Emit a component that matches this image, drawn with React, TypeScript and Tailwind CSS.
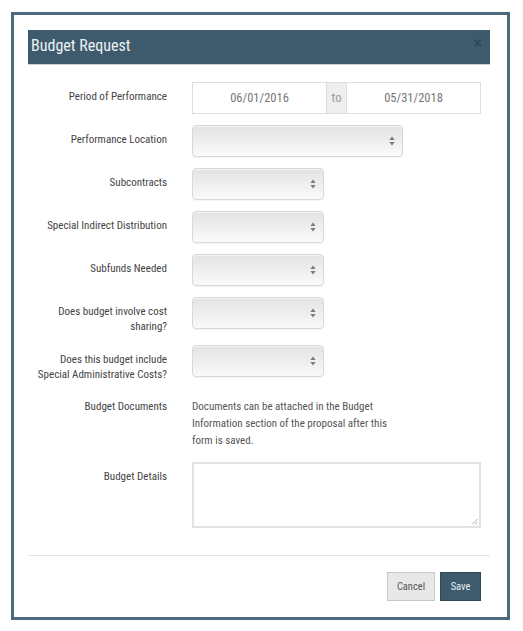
import React from "react";

const font = { fontFamily: "'Roboto Condensed', Roboto, sans-serif" };

function Arrows() {
  return (
    <svg width="6" height="10" viewBox="0 0 6 10" className="absolute right-[7px] top-1/2 -translate-y-1/2">
      <path d="M3 0.5 L5.6 4 L0.4 4 Z" fill="#7a7a7a" />
      <path d="M3 9.5 L5.6 6 L0.4 6 Z" fill="#7a7a7a" />
    </svg>
  );
}

function Select({ w }: { w: string }) {
  return (
    <div
      className={`relative h-[32px] ${w} rounded-[4px] border border-[#d8d8d8] bg-gradient-to-b from-[#e3e3e3] to-[#fafafa] shadow-[inset_0_1px_1px_rgba(255,255,255,0.6),0_1px_1px_rgba(0,0,0,0.05)]`}
    >
      <Arrows />
    </div>
  );
}

function Label({ children }: { children: React.ReactNode }) {
  return (
    <div className="w-[139px] shrink-0 pt-[7px] text-right text-[11px] leading-[15px] text-[#444]">
      {children}
    </div>
  );
}

function Row({ label, children, mb = "mb-[11px]" }: { label: React.ReactNode; children: React.ReactNode; mb?: string }) {
  return (
    <div className={`flex items-start gap-[25px] ${mb}`}>
      <Label>{label}</Label>
      {children}
    </div>
  );
}

export default function App() {
  return (
    <div className="min-h-[631px] w-[523px] bg-white pl-[11px] pt-[12px]" style={font}>
      <div className="w-[499px] h-[608px] border-[3px] border-[#4b6a7c] bg-white pl-[14px] pr-[17px] pt-[15px]">
        <div className="relative h-[35px] bg-[#3d5b6d] border-b border-[#c9d3d8] flex items-center pl-[3px]">
          <span className="text-[16px] text-[#eef2f5] leading-none -mt-[3px]">Budget Request</span>
          <span className="absolute right-[8px] top-[5px] text-[15px] font-bold text-[#2e4757] leading-none" style={{ fontFamily: "'Liberation Sans', sans-serif" }}>×</span>
        </div>

        <div className="pt-[17px]">
          <Row label="Period of Performance">
            <div className="flex h-[32px] w-[289px] border border-[#dedede] text-[12.5px] text-[#777]">
              <div className="flex-1 flex items-center justify-center">06/01/2016</div>
              <div className="w-[21px] bg-[#eeeeee] border-x border-[#dedede] flex items-center justify-center text-[#999]">to</div>
              <div className="flex-1 flex items-center justify-center">05/31/2018</div>
            </div>
          </Row>
          <Row label="Performance Location">
            <Select w="w-[211px]" />
          </Row>
          <Row label="Subcontracts">
            <Select w="w-[132px]" />
          </Row>
          <Row label="Special Indirect Distribution">
            <Select w="w-[132px]" />
          </Row>
          <Row label="Subfunds Needed">
            <Select w="w-[132px]" />
          </Row>
          <Row label={<>Does budget involve cost<br />sharing?</>}>
            <Select w="w-[132px]" />
          </Row>
          <Row label={<>Does this budget include<br />Special Administrative Costs?</>} mb="mb-[16px]">
            <Select w="w-[132px]" />
          </Row>
          <div className="flex items-start gap-[25px] mb-[13px]">
            <div className="w-[139px] shrink-0 text-right text-[11px] leading-[17px] text-[#444]">Budget Documents</div>
            <div className="w-[198px] text-[11px] leading-[17px] text-[#555]">
              Documents can be attached in the Budget Information section of the proposal after this form is saved.
            </div>
          </div>
          <div className="flex items-start gap-[25px]">
            <Label>Budget Details</Label>
            <div className="relative h-[66px] w-[289px] border-2 border-[#e2e2e2] bg-white">
              <svg width="7" height="7" viewBox="0 0 7 7" className="absolute right-[1px] bottom-[1px]">
                <path d="M6.5 1 L1 6.5 M6.5 4 L4 6.5" stroke="#999" strokeWidth="0.8" />
              </svg>
            </div>
          </div>
        </div>

        <div className="mt-[27px] border-t border-[#e5e5e5] flex justify-end gap-[5px] pt-[16px] pr-[9px]">
          <button className="h-[29px] w-[48px] bg-[#e8e8e8] border border-[#c8c8c8] text-[10.5px] text-[#555]">Cancel</button>
          <button className="h-[29px] w-[41px] bg-[#3d5b6d] border border-[#2f4a59] text-[10.5px] text-[#e9eef1]">Save</button>
        </div>
      </div>
    </div>
  );
}
